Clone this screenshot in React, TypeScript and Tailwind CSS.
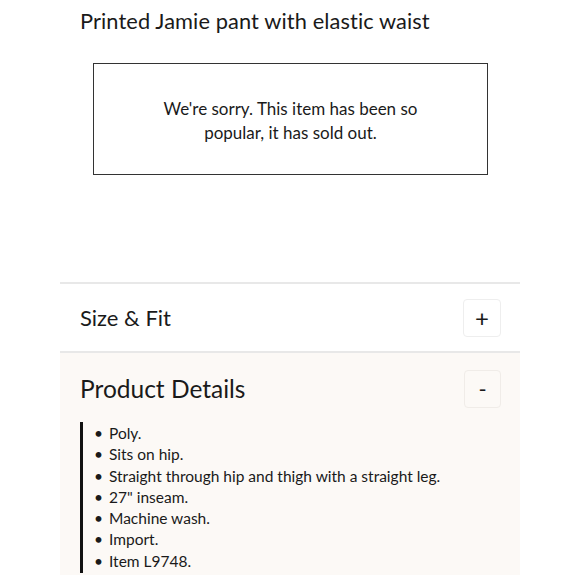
import React, { useState } from 'react';

const details = [
  'Poly.',
  'Sits on hip.',
  'Straight through hip and thigh with a straight leg.',
  '27" inseam.',
  'Machine wash.',
  'Import.',
  'Item L9748.',
];

export default function App() {
  const [sizeOpen, setSizeOpen] = useState(false);
  const [detailsOpen, setDetailsOpen] = useState(true);

  return (
    <div className="w-[580px] h-[580px] bg-white text-[#1a1a1a] font-['Lato','Noto_Sans',sans-serif] overflow-hidden">
      <div className="px-[80px] pt-[7px]">
        <h1 className="text-[21.8px] leading-[28px] tracking-[0.1px]">Printed Jamie pant with elastic waist</h1>
      </div>

      <div className="ml-[93px] mt-[28px] w-[395px] h-[112px] border border-[#333] flex items-center justify-center">
        <p className="text-center text-[17px] leading-[24px] px-[60px] pt-[4px]">
          We're sorry. This item has been so popular, it has sold out.
        </p>
      </div>

      <div className="mx-[60px] mt-[107px]">
        <div className="border-t-2 border-[#e8e8e8]">
          <div className="flex items-center justify-between pl-[20px] pr-[19px] h-[67px]">
            <span className="text-[22px]">Size &amp; Fit</span>
            <button
              onClick={() => setSizeOpen(!sizeOpen)}
              className="w-[38px] h-[38px] rounded-[4px] border border-[#eeeeee] bg-white flex items-center justify-center text-[24px] leading-none"
            >
              {sizeOpen ? '-' : '+'}
            </button>
          </div>
        </div>

        <div className="border-t-2 border-[#e8e8e8] bg-[#fcf9f6] pb-[2px]">
          <div className="flex items-center justify-between pl-[20px] pr-[19px] h-[72px]">
            <span className="text-[24.5px]">Product Details</span>
            <button
              onClick={() => setDetailsOpen(!detailsOpen)}
              className="w-[37px] h-[38px] rounded-[4px] border border-[#f0ece8] bg-[#fcf9f6] flex items-center justify-center text-[22px] leading-none"
            >
              {detailsOpen ? '-' : '+'}
            </button>
          </div>
          {detailsOpen && (
            <ul className="-mt-[3px] ml-[20px] border-l-[3px] border-[#111] pl-[11px] py-[1px] text-[15.5px] leading-[21.3px]">
              {details.map((d) => (
                <li key={d} className="flex gap-[6px]">
                  <span>•</span>
                  <span>{d}</span>
                </li>
              ))}
            </ul>
          )}
        </div>
      </div>
    </div>
  );
}
